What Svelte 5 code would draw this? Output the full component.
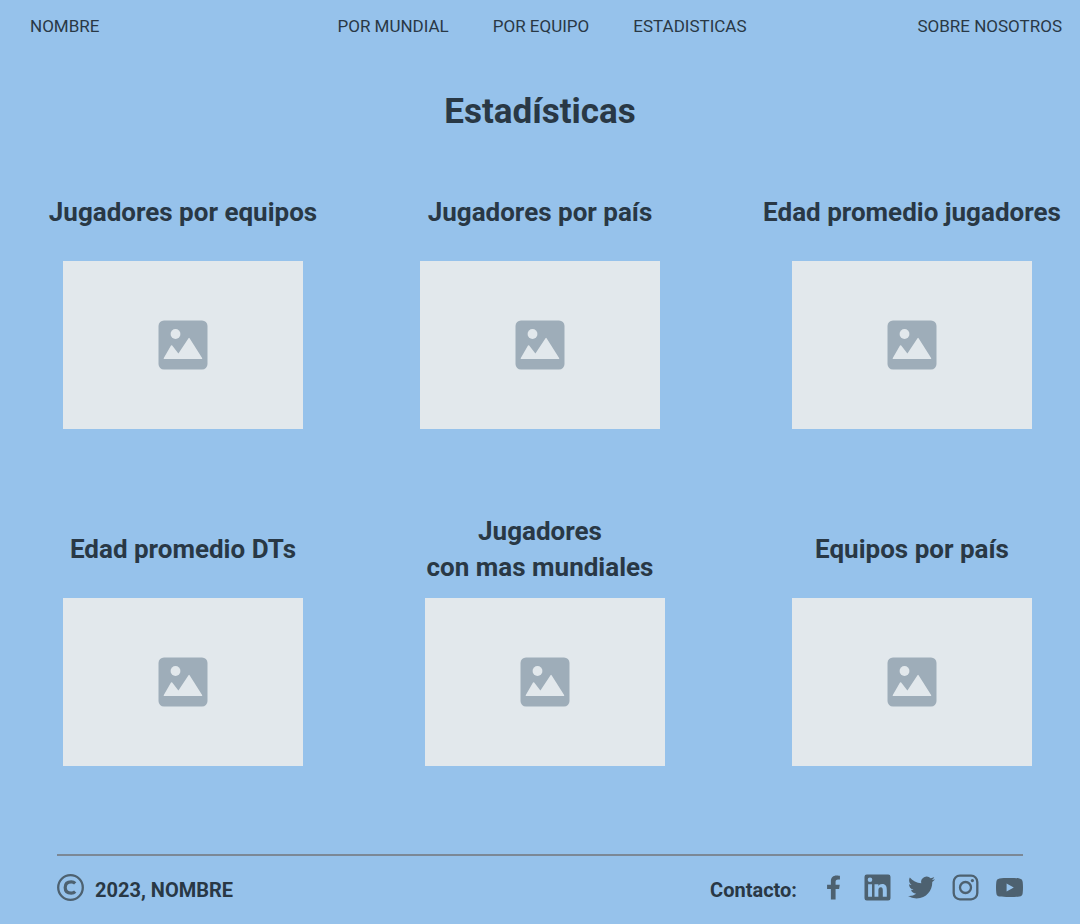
<script>
  const links = ['POR MUNDIAL', 'POR EQUIPO', 'ESTADISTICAS'];

  const cards = [
    { lines: ['Jugadores por equipos'] },
    { lines: ['Jugadores por país'] },
    { lines: ['Edad promedio jugadores'] },
    { lines: ['Edad promedio DTs'] },
    { lines: ['Jugadores', 'con mas mundiales'], shifted: true },
    { lines: ['Equipos por país'] }
  ];
</script>

<div class="page">
  <header>
    <a href="#inicio">NOMBRE</a>
    <nav aria-label="Principal">
      {#each links as link}
        <a href="#{link.toLowerCase().replace(' ', '-')}">{link}</a>
      {/each}
    </nav>
    <a class="about" href="#sobre-nosotros">SOBRE NOSOTROS</a>
  </header>

  <main>
    <h1>Estadísticas</h1>
    <div class="grid">
      {#each cards as card}
        <section>
          <h2>
            {#each card.lines as line}
              <span>{line}</span>
            {/each}
          </h2>
          <div class="frame" class:shifted={card.shifted}>
            <svg width="50" height="50" viewBox="0 0 50 50" aria-hidden="true">
              <rect x="0.5" y="0.5" width="49" height="49" rx="5.5" fill="#9eadb9" />
              <circle cx="17.5" cy="14" r="4.9" fill="#e2e8ec" />
              <path d="M6.2 39 Q5.2 39 5.8 38 L13 25.600 Q13.600 24.800 14.200 25.600 L20.400 33.600 L30.500 18.200 Q31 17.400 31.600 18.200 L44.100 38 Q44.700 39 43.600 39 Z" fill="#e2e8ec" />
            </svg>
          </div>
        </section>
      {/each}
    </div>
  </main>

  <footer>
    <div class="copy">
      <svg width="27" height="27" viewBox="0 0 27 27" aria-hidden="true">
        <circle cx="13.5" cy="13.5" r="12.3" fill="none" stroke="currentColor" stroke-width="2.3" />
        <path d="M18.2 9.3 C17.2 8.3 15.7 7.8 14.2 7.8 C10.4 7.8 8.2 10 8.2 13.5 C8.2 17 10.4 19.2 14.2 19.2 C15.7 19.2 17.2 18.7 18.2 17.7" fill="none" stroke="currentColor" stroke-width="3.2" />
      </svg>
      <p>2023, NOMBRE</p>
    </div>
    <div class="contact">
      <p>Contacto:</p>
      <div class="social">
        <a href="#facebook" aria-label="Facebook">
          <svg width="15" height="25" viewBox="0 0 320 512"><path d="M279.14 288l14.22-92.66h-88.91v-60.13c0-25.35 12.42-50.06 52.24-50.06h40.42V6.26S260.43 0 225.36 0c-73.22 0-121.08 44.38-121.08 124.72v70.62H22.89V288h81.39v224h100.17V288z" /></svg>
        </a>
        <a href="#linkedin" aria-label="LinkedIn">
          <svg width="27" height="27" viewBox="-0.5 -0.5 27 27"><path fill-rule="evenodd" d="M2.3 0h21.4A2.3 2.3 0 0 1 26 2.3v21.4a2.3 2.3 0 0 1-2.3 2.3H2.3A2.3 2.3 0 0 1 0 23.7V2.3A2.3 2.3 0 0 1 2.3 0zM5.5 3a2.3 2.3 0 1 0 0 4.6a2.3 2.3 0 0 0 0-4.6zM3.6 9.7v12.6h3.9V9.7zM10 9.7v12.6h3.9v-6.2c0-1.8.5-3.3 2.4-3.3c1.8 0 2 1.6 2 3.4v6.1h4v-6.9c0-3.5-.9-6-4.700-6c-1.900 0-3.100.9-3.700 2V9.700z" /></svg>
        </a>
        <a href="#twitter" aria-label="Twitter">
          <svg width="27" height="27" viewBox="0 0 24 24"><path d="M23.953 4.57a10 10 0 01-2.825.775 4.958 4.958 0 002.163-2.723c-.951.555-2.005.959-3.127 1.184a4.92 4.92 0 00-8.384 4.482C7.69 8.095 4.067 6.13 1.64 3.162a4.822 4.822 0 00-.666 2.475c0 1.71.87 3.213 2.188 4.096a4.904 4.904 0 01-2.228-.616v.06a4.923 4.923 0 003.946 4.827 4.996 4.996 0 01-2.212.085 4.936 4.936 0 004.604 3.417 9.867 9.867 0 01-6.102 2.105c-.39 0-.779-.023-1.17-.067a13.995 13.995 0 007.557 2.209c9.053 0 13.998-7.496 13.998-13.985 0-.21 0-.42-.015-.63A9.935 9.935 0 0024 4.59z" /></svg>
        </a>
        <a href="#instagram" aria-label="Instagram">
          <svg width="27" height="27" viewBox="-0.5 -0.5 27 27">
            <rect x="1.2" y="1.2" width="23.6" height="23.6" rx="6.2" fill="none" stroke="currentColor" stroke-width="2.3" />
            <circle cx="13" cy="13" r="5.5" fill="none" stroke="currentColor" stroke-width="2.3" />
            <circle cx="19.9" cy="6.1" r="1.6" />
          </svg>
        </a>
        <a href="#youtube" aria-label="YouTube">
          <svg width="27" height="19" viewBox="0 0 27 19"><path fill-rule="evenodd" d="M13.5 0C18 0 21 .1 23.4.4C25.5.7 26.5 1.8 26.7 4C27.1 7.6 27.1 11.4 26.7 15C26.5 17.2 25.5 18.3 23.4 18.6C21 18.9 18 19 13.5 19C9 19 6 18.9 3.6 18.6C1.5 18.3.5 17.2.3 15C-.1 11.4-.1 7.6.3 4C.5 1.8 1.5.7 3.6.4C6 .1 9 0 13.5 0zM10.6 5.4v8.2l7.2-4.1z" /></svg>
        </a>
      </div>
    </div>
  </footer>
</div>

<style>
  :global(body) {
    margin: 0;
    background: #96c2eb;
  }

  .page {
    display: flex;
    flex-direction: column;
    min-height: 100vh;
    color: #293845;
    font-family: Roboto, "Liberation Sans", sans-serif;
  }

  header {
    display: grid;
    grid-template-columns: 1fr auto 1fr;
    align-items: center;
    padding: 14px 18px 16px 30px;
    font-size: 17px;
    line-height: 24px;
  }

  a {
    color: inherit;
    text-decoration: none;
  }

  nav {
    display: flex;
    gap: 44px;
    margin-right: 8px;
  }

  .about {
    justify-self: end;
  }

  main {
    flex: 1;
  }

  h1 {
    margin: 34px 0 40px;
    font-size: 35px;
    font-weight: 700;
    line-height: 48px;
    text-align: center;
  }

  .grid {
    display: grid;
    grid-template-columns: 300fr 414fr 330fr;
    row-gap: 84px;
    padding: 0 3px 0 33px;
  }

  section {
    display: flex;
    flex-direction: column;
    align-items: center;
    gap: 13px;
    min-width: 0;
  }

  h2 {
    display: flex;
    flex-direction: column;
    justify-content: center;
    min-height: 72px;
    margin: 0;
    font-size: 26px;
    font-weight: 700;
    line-height: 36px;
    text-align: center;
  }

  .frame {
    display: grid;
    place-items: center;
    width: 240px;
    height: 168px;
    background: #e2e8ec;
  }

  .shifted {
    margin-left: 10px;
  }

  footer {
    display: flex;
    justify-content: space-between;
    align-items: center;
    margin: 88px 57px 0;
    padding: 16px 0 21px;
    border-top: 2px solid #7b8896;
    font-size: 20px;
    font-weight: 700;
  }

  p {
    margin: 0;
    padding-top: 5px;
    line-height: 26px;
  }

  svg {
    display: block;
    fill: currentColor;
  }

  .copy {
    display: flex;
    align-items: center;
    gap: 11px;
  }

  .copy svg,
  .social {
    color: #4d6170;
  }

  .contact {
    display: flex;
    align-items: center;
    gap: 23px;
  }

  .social {
    display: flex;
    gap: 17px;
  }

  .social a {
    display: grid;
    place-items: center;
    width: 27px;
    height: 27px;
  }
</style>
